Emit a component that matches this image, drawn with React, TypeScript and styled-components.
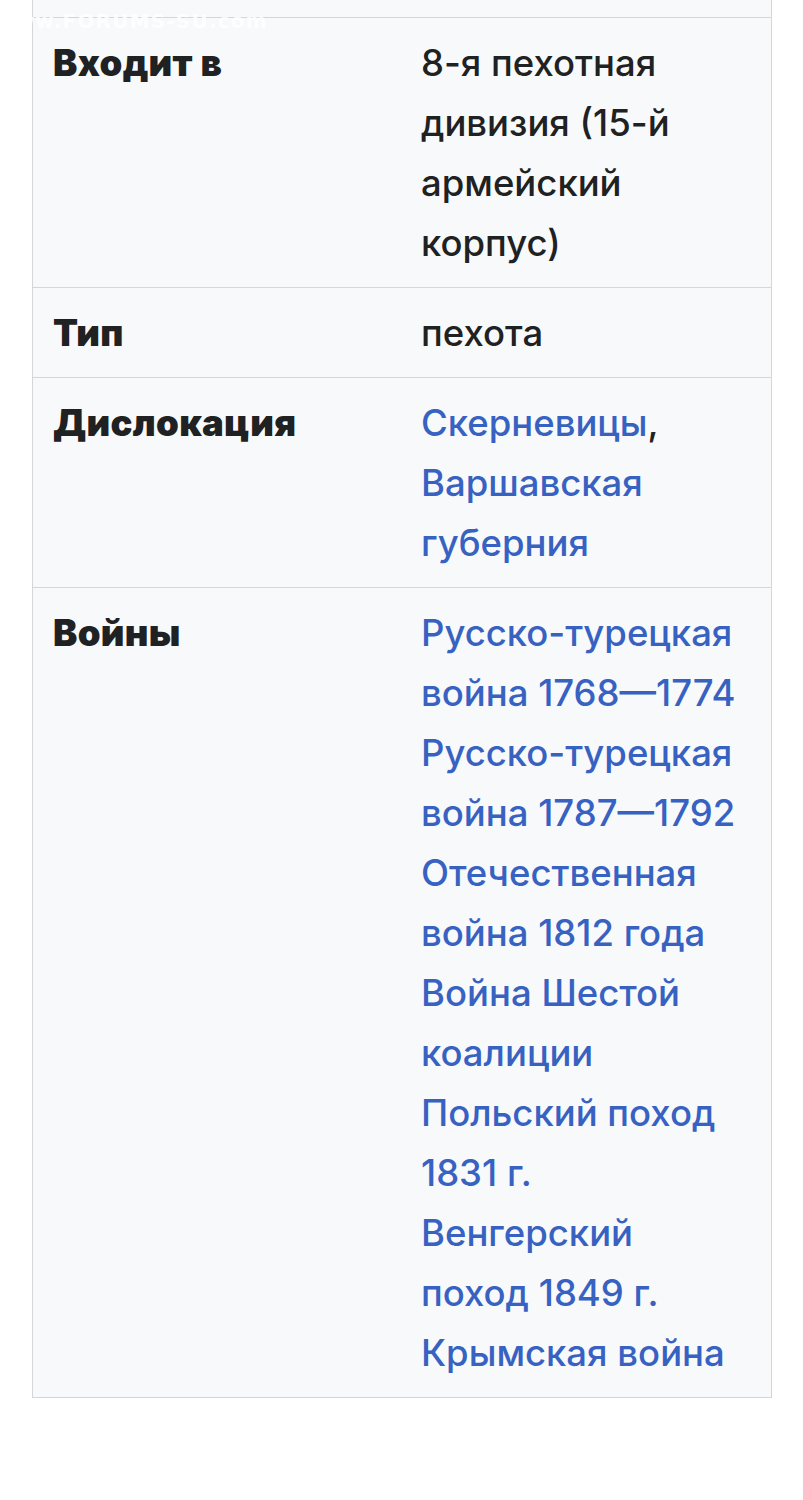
import styled, { createGlobalStyle } from 'styled-components';

const Global = createGlobalStyle`
    body {
        margin: 0;
        background: #ffffff;
        font-family: Inter, "Noto Sans", sans-serif;
    }
`;

const Page = styled.div`
    position: relative;
    width: 803px;
    min-height: 1500px;
    padding: 0 31px 0 32px;
    box-sizing: border-box;
`;

const Watermark = styled.span`
    position: absolute;
    top: 9px;
    left: -4px;
    font-size: 20px;
    font-weight: 800;
    letter-spacing: 1.2px;
    color: rgba(255, 255, 255, 0.9);
    font-family: "DejaVu Sans", sans-serif;
`;

const Infobox = styled.div`
    background: #f8f9fa;
    border: 1px solid #d3d6db;
    border-top: 0;
`;

const CutRow = styled.div`
    height: 17px;
`;

const Row = styled.div`
    display: grid;
    grid-template-columns: 368px 1fr;
    border-top: 1px solid #d3d6db;
`;

const Cell = styled.div`
    padding: 15px 26px 14px 20px;
    font-size: 36.5px;
    line-height: 60px;
    color: #202122;
`;

const Label = styled(Cell)`
    font-weight: 900;
    letter-spacing: 0.3px;
`;

const Link = styled.a`
    color: #3762c2;
    text-decoration: none;
    font-weight: 500;
    display: ${(props: { $block?: boolean }) => (props.$block ? 'block' : 'inline')};
`;

const Plain = styled.span`
    font-weight: 500;
`;

const wars = [
    'Русско-турецкая война 1768—1774',
    'Русско-турецкая война 1787—1792',
    'Отечественная война 1812 года',
    'Война Шестой коалиции',
    'Польский поход 1831 г.',
    'Венгерский поход 1849 г.',
    'Крымская война',
];

const App = () => {
    return (
        <>
            <Global />
            <Page>
                <Watermark>www.FORUMS-SU.com</Watermark>
                <Infobox>
                    <CutRow />
                    <Row>
                        <Label>Входит в</Label>
                        <Cell><Plain>8-я пехотная дивизия (15-й армейский корпус)</Plain></Cell>
                    </Row>
                    <Row>
                        <Label>Тип</Label>
                        <Cell><Plain>пехота</Plain></Cell>
                    </Row>
                    <Row>
                        <Label>Дислокация</Label>
                        <Cell>
                            <Link href="#">Скерневицы</Link><Plain>,</Plain> <Link href="#">Варшавская губерния</Link>
                        </Cell>
                    </Row>
                    <Row>
                        <Label>Войны</Label>
                        <Cell>
                            {wars.map((w) => (
                                <Link key={w} href="#" $block>{w}</Link>
                            ))}
                        </Cell>
                    </Row>
                </Infobox>
            </Page>
        </>
    );
};

export default App;
